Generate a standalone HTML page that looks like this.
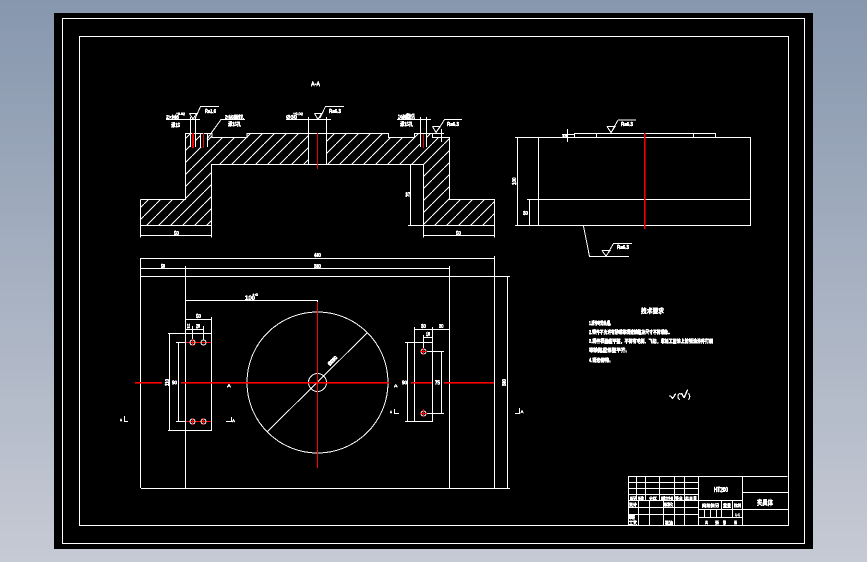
<!DOCTYPE html>
<html lang="zh">
<head>
<meta charset="utf-8">
<title>夹具体</title>
<style>
html,body{margin:0;padding:0;width:867px;height:562px;overflow:hidden;background:linear-gradient(180deg,#8797ae 0%,#c6cad4 100%);}
svg{position:absolute;left:0;top:0;display:block;}
.l{fill:none;stroke:#fff;stroke-width:1;shape-rendering:crispEdges;}
.r{fill:none;stroke:#f00;stroke-width:1;shape-rendering:crispEdges;}
text{font-family:"Liberation Sans","Noto Sans CJK SC",sans-serif;font-weight:bold;fill:#fff;stroke:#fff;stroke-width:.2;font-size:5px;filter:url(#b);}
</style>
</head>
<body>
<svg width="867" height="562" viewBox="0 0 867 562" xmlns="http://www.w3.org/2000/svg">
<defs>
<filter id="b" x="-30%" y="-30%" width="160%" height="160%" color-interpolation-filters="sRGB">
<feComponentTransfer>
<feFuncA type="discrete" tableValues="0 1 1 1"/>
</feComponentTransfer>
</filter>
<pattern id="h" patternUnits="userSpaceOnUse" width="12" height="12">
<path d="M0 12L12 0" stroke="#fff" stroke-width="1" shape-rendering="crispEdges" fill="none"/>
</pattern>
</defs>
<rect x="54" y="13" width="759" height="536" fill="#000"/>
<rect class="l" x="62.5" y="18.5" width="742" height="525"/>
<rect class="l" x="79.5" y="36.5" width="709" height="489"/>

<!-- section view -->
<path fill="url(#h)" d="M140.5 199.5H185.5V133.5H212V137.5H247V133.5H388.5V137.5H414.5V133.5H432.5V137.5H449.5V199.5H494.5V225.5H423.5V164.5H211.5V225.5H140.5Z"/>
<rect x="308" y="133" width="18" height="31" fill="#000"/>
<rect x="190" y="133" width="6" height="14" fill="#000"/>
<rect x="200" y="133" width="7" height="14" fill="#000"/>
<rect x="420" y="134" width="6" height="13" fill="#000"/>
<path class="l" d="M140.5 199.5H185.5V133.5H212V137.5H247V133.5H388.5V137.5H414.5V133.5H432.5V137.5H449.5V199.5H494.5V237.5M140.5 199.5V237.5M140.5 225.5H211.5M423.5 225.5H494.5M211.5 237.5V164.5H423.5V237.5M140.5 235.5H211.5M423.5 235.5H494.5"/>
<path class="l" d="M308.5 117V164M326.5 117V164M286 119.5H331M166 119.5H200M397 119.5H431"/>
<path class="l" d="M190.5 117V147M195.5 117V147M200.5 133V147M207.5 133V147M420.5 117V147M426.5 117V147"/>
<path class="l" d="M207 139L221 119.5H245M410.5 164V225M408 225.5H423"/>
<path class="l" d="M189.5 113.5H196.5L193 119L189.5 113.5M195 119L200.5 106.5H219"/>
<path class="l" d="M314.5 113.5H321.5L318 119.5L314.5 113.5M320 118L325.5 106.5H344"/>
<path class="l" d="M432.5 126.5H440L436 132.5L432.5 126.5M438 130L444.5 119.5H462M441.5 129V142M432 133.5H444"/>
<rect x="192" y="133" width="2" height="15" fill="#e00"/>
<rect x="203" y="133" width="1" height="15" fill="#e00"/>
<rect x="423" y="134" width="1" height="14" fill="#e00"/>
<rect x="317" y="133" width="1" height="36" fill="#e00"/>

<text x="311" y="86" font-size="6" textLength="9" lengthAdjust="spacingAndGlyphs" style="font-size:6px">A-A</text>
<text x="166" y="119" textLength="13" lengthAdjust="spacingAndGlyphs">2×M6</text>
<text x="176" y="115" textLength="9" lengthAdjust="spacingAndGlyphs" style="font-size:3.5px">+0.02</text>
<text x="171" y="127" textLength="9" lengthAdjust="spacingAndGlyphs">深15</text>
<text x="205" y="113" textLength="11" lengthAdjust="spacingAndGlyphs">Ra1.6</text>
<text x="225" y="119" textLength="19" lengthAdjust="spacingAndGlyphs">2×M6螺纹孔</text>
<text x="228" y="126" textLength="13" lengthAdjust="spacingAndGlyphs">深15孔</text>
<text x="286" y="119" textLength="11" lengthAdjust="spacingAndGlyphs">Ø30</text>
<text x="293" y="115" textLength="10" lengthAdjust="spacingAndGlyphs" style="font-size:3.5px">+0.02</text>
<text x="329" y="113" textLength="12" lengthAdjust="spacingAndGlyphs">Ra6.3</text>
<text x="398" y="119" textLength="17" lengthAdjust="spacingAndGlyphs" style="font-size:6px">2×M6螺纹孔</text>
<text x="400" y="126" textLength="13" lengthAdjust="spacingAndGlyphs">深15孔</text>
<text x="447" y="126" textLength="12" lengthAdjust="spacingAndGlyphs">Ra6.3</text>
<text x="410" y="197" transform="rotate(-90 410 197)" textLength="5" lengthAdjust="spacingAndGlyphs">75</text>
<text x="174" y="235" textLength="5" lengthAdjust="spacingAndGlyphs">50</text>
<text x="456" y="235" textLength="5" lengthAdjust="spacingAndGlyphs">50</text>

<!-- side view -->
<path class="l" d="M515 137.5H750.5V225.5H515M517.5 137V225M538.5 137V225M527 199.5H750M529.5 199V225"/>
<path class="l" d="M574.5 133.5H715M574.5 133V137M596.5 133V137M693.5 133V137M715.5 133V137M567.5 129V142M562 134.5H574"/>
<path class="l" d="M583.5 226L589.5 256.5H629M602 250.5H610L606 256L602 250.5M608 253L613.5 243.5H632"/>
<path class="l" d="M607 126.5H615L611 132.5L607 126.5M613 129L618 120M618 120H636"/>
<rect x="644" y="133" width="1.6" height="96" fill="#e00"/>
<text x="516" y="185" transform="rotate(-90 516 185)" textLength="7.5" lengthAdjust="spacingAndGlyphs">100</text>
<text x="523" y="215" textLength="5" lengthAdjust="spacingAndGlyphs">30</text>
<text x="562" y="137" textLength="5" lengthAdjust="spacingAndGlyphs" style="font-size:4px">15</text>
<text x="621" y="126" textLength="12" lengthAdjust="spacingAndGlyphs">Ra6.3</text>
<text x="617" y="249" textLength="12" lengthAdjust="spacingAndGlyphs">Ra6.3</text>

<!-- plan view -->
<path class="l" d="M140.5 258.5H494.5M494.5 256V488M140.5 258V488M140.5 268.5H449.5M185.5 266V488M449.5 266V488M140.5 276.5H510M141 488.5H510M507.5 276V488"/>
<path class="l" d="M185.5 300.5H317.5V303"/>
<circle class="l" cx="317.5" cy="382.5" r="70.5"/>
<circle class="l" cx="317.5" cy="382.5" r="9"/>
<path class="l" d="M367.5 332.5L267.5 431.5"/>
<!-- left block -->
<path class="l" d="M168 333.5H211.5V430.5H168M169.5 333V430M176 342.5H186M176 421.5H186M178.5 342V421M185.5 319.5H211.5M211.5 317V333M185.5 329.5H203.5M192.5 326V340M203.5 326V340"/>
<path class="r" d="M186 342.5H211M186 421.5H211"/>
<circle class="l" cx="192.5" cy="342.5" r="2.5"/>
<circle class="l" cx="203.5" cy="342.5" r="2.5"/>
<circle class="l" cx="192.5" cy="421.5" r="2.5"/>
<circle class="l" cx="203.5" cy="421.5" r="2.5"/>
<path class="r" d="M192.5 339V346M192.5 418V425M203.5 418V425"/>
<!-- right block -->
<path class="l" d="M414.5 342.5H432.5V421.5H414.5ZM405 342.5H414M405 421.5H414M407.5 342V421M414.5 329.5H449.5M414.5 327V342M432.5 327V342M423.5 335V349M423.5 337.5H432.5M426 351.5H444M426 413.5H444M441.5 351V414"/>
<circle class="l" cx="423.5" cy="351.5" r="2.5"/>
<circle class="l" cx="423.5" cy="413.5" r="2.5"/>
<path class="r" d="M420 351.5H427M423.5 348V355M420 413.5H427M423.5 409V417"/>
<!-- centre lines -->
<rect x="317" y="302" width="1" height="166" fill="#f00"/>
<rect x="135" y="382" width="27" height="1.6" fill="#f00"/>
<rect x="181" y="382" width="208" height="1.6" fill="#f00"/>
<rect x="411" y="382" width="21" height="1.6" fill="#f00"/>
<rect x="444" y="382" width="50" height="1.6" fill="#f00"/>
<!-- section marks -->
<path class="l" d="M226 421.5H231.5V417M394.5 409V413.5H399M515 413.5H519.5V408M124.5 416V421.5H128"/>
<text x="232" y="422" textLength="3" lengthAdjust="spacingAndGlyphs" style="font-size:4px">A</text>
<text x="390" y="413" textLength="2" lengthAdjust="spacingAndGlyphs" style="font-size:4px">A</text>
<text x="520.5" y="413" textLength="3" lengthAdjust="spacingAndGlyphs" style="font-size:4px">A</text>
<text x="120" y="421" textLength="2" lengthAdjust="spacingAndGlyphs" style="font-size:4px">A</text>
<text x="314" y="257" textLength="7" lengthAdjust="spacingAndGlyphs">400</text>
<text x="161" y="268" textLength="4" lengthAdjust="spacingAndGlyphs">50</text>
<text x="314" y="268" textLength="7" lengthAdjust="spacingAndGlyphs">300</text>
<text x="245" y="300" textLength="10" lengthAdjust="spacingAndGlyphs" style="font-size:6px">100</text>
<text x="252" y="296" textLength="6" lengthAdjust="spacingAndGlyphs" style="font-size:4px">+0</text>
<text x="196" y="318" textLength="5" lengthAdjust="spacingAndGlyphs">50</text>
<text x="187" y="328" textLength="3" lengthAdjust="spacingAndGlyphs">15</text>
<text x="196" y="328" textLength="4" lengthAdjust="spacingAndGlyphs">20</text>
<text x="169" y="386" transform="rotate(-90 169 386)" textLength="7" lengthAdjust="spacingAndGlyphs">110</text>
<text x="172" y="384.5" textLength="5" lengthAdjust="spacingAndGlyphs">90</text>
<text x="227" y="387" textLength="4" lengthAdjust="spacingAndGlyphs" style="font-size:4px">A</text>
<text x="394" y="387" textLength="3.5" lengthAdjust="spacingAndGlyphs" style="font-size:4px">A</text>
<text x="402" y="384.5" textLength="5" lengthAdjust="spacingAndGlyphs">90</text>
<text x="435" y="384.5" textLength="5" lengthAdjust="spacingAndGlyphs">75</text>
<text x="421" y="328" textLength="5" lengthAdjust="spacingAndGlyphs">30</text>
<text x="439" y="328" textLength="4.5" lengthAdjust="spacingAndGlyphs">30</text>
<text x="426" y="336" textLength="4" lengthAdjust="spacingAndGlyphs">10</text>
<text x="506" y="386" transform="rotate(-90 506 386)" textLength="7" lengthAdjust="spacingAndGlyphs">300</text>
<text x="330" y="366" transform="rotate(-45 330 366)" textLength="11" lengthAdjust="spacingAndGlyphs">Ø200</text>

<!-- technical requirements -->
<text x="641" y="313" textLength="23" lengthAdjust="spacingAndGlyphs" style="font-size:6.5px">技术要求</text>
<text x="589" y="325" textLength="24" lengthAdjust="spacingAndGlyphs">1.铸件时效处理。</text>
<text x="589" y="334" textLength="83" lengthAdjust="spacingAndGlyphs">2.铸件不允许有砂眼等铸造缺陷及尺寸不符现象。</text>
<text x="589" y="343" textLength="124" lengthAdjust="spacingAndGlyphs">3.铸件表面应平整，不得有毛刺、飞边，非加工面涂上防锈油漆并打磨</text>
<text x="589" y="352" textLength="41" lengthAdjust="spacingAndGlyphs">等缺陷应修整平齐。</text>
<text x="589" y="362" textLength="24" lengthAdjust="spacingAndGlyphs">4.锐边倒钝。</text>
<text x="669" y="398.5" textLength="7" lengthAdjust="spacingAndGlyphs" style="font-size:6px;font-weight:normal">√</text>
<text x="677" y="398" textLength="3" lengthAdjust="spacingAndGlyphs" style="font-size:6px;font-weight:normal">(</text>
<text x="680" y="398" textLength="8" lengthAdjust="spacingAndGlyphs" style="font-size:10px;font-weight:normal">√</text>
<text x="688" y="398" textLength="2.5" lengthAdjust="spacingAndGlyphs" style="font-size:6px;font-weight:normal">)</text>

<!-- title block -->
<path class="l" d="M628.5 476.5H787.5M628.5 476V525M698.5 476V525M742.5 476V525M742 492.5H788M742 509.5H788"/>
<path class="l" d="M698 500.5H742M698 509.5H742M698 517.5H742M704.5 509V517M710.5 509V517M716.5 509V517M721.5 500V517M732.5 500V517"/>
<path class="l" d="M628 482.5H698M628 488.5H698M628 494.5H698M628 500.5H698M628 507.5H698M628 514.5H698"/>
<path class="l" d="M636.5 476V500M645.5 476V500M659.5 476V500M674.5 476V525M684.5 476V525M638.5 500V525M649.5 500V525M663.5 500V525"/>
<text x="714" y="492" textLength="14" lengthAdjust="spacingAndGlyphs" style="font-size:7px">HT200</text>
<text x="757" y="505" textLength="16" lengthAdjust="spacingAndGlyphs" style="font-size:7px">夹具体</text>
<text x="630" y="500" textLength="6" lengthAdjust="spacingAndGlyphs" style="font-size:4px">标记</text>
<text x="638" y="500" textLength="6" lengthAdjust="spacingAndGlyphs" style="font-size:4px">处数</text>
<text x="649" y="500" textLength="8" lengthAdjust="spacingAndGlyphs" style="font-size:4px">分区</text>
<text x="661" y="500" textLength="12" lengthAdjust="spacingAndGlyphs" style="font-size:4px">更改文件号</text>
<text x="675" y="500" textLength="8" lengthAdjust="spacingAndGlyphs" style="font-size:4px">签名</text>
<text x="685" y="500" textLength="12" lengthAdjust="spacingAndGlyphs" style="font-size:4px">年月日</text>
<text x="629" y="506" textLength="8" lengthAdjust="spacingAndGlyphs" style="font-size:4px">设计</text>
<text x="664" y="506" textLength="9" lengthAdjust="spacingAndGlyphs" style="font-size:4px">标准化</text>
<text x="629" y="519" textLength="6" lengthAdjust="spacingAndGlyphs" style="font-size:5px">审核</text>
<text x="629" y="525" textLength="8" lengthAdjust="spacingAndGlyphs" style="font-size:5px">工艺</text>
<text x="665" y="525" textLength="8" lengthAdjust="spacingAndGlyphs" style="font-size:5px">批准</text>
<text x="702" y="507" textLength="17" lengthAdjust="spacingAndGlyphs" style="font-size:4px">阶段标记</text>
<text x="723" y="507" textLength="8" lengthAdjust="spacingAndGlyphs" style="font-size:4px">重量</text>
<text x="734" y="507" textLength="7" lengthAdjust="spacingAndGlyphs" style="font-size:4px">比例</text>
<text x="735" y="516" textLength="5" lengthAdjust="spacingAndGlyphs" style="font-size:4px">1:1</text>
<text x="705" y="524" textLength="3" lengthAdjust="spacingAndGlyphs" style="font-size:4px">共</text>
<text x="715" y="524" textLength="4" lengthAdjust="spacingAndGlyphs" style="font-size:4px">张</text>
<text x="723" y="524" textLength="3" lengthAdjust="spacingAndGlyphs" style="font-size:4px">第</text>
<text x="734" y="524" textLength="3" lengthAdjust="spacingAndGlyphs" style="font-size:4px">张</text>
</svg>
</body>
</html>
